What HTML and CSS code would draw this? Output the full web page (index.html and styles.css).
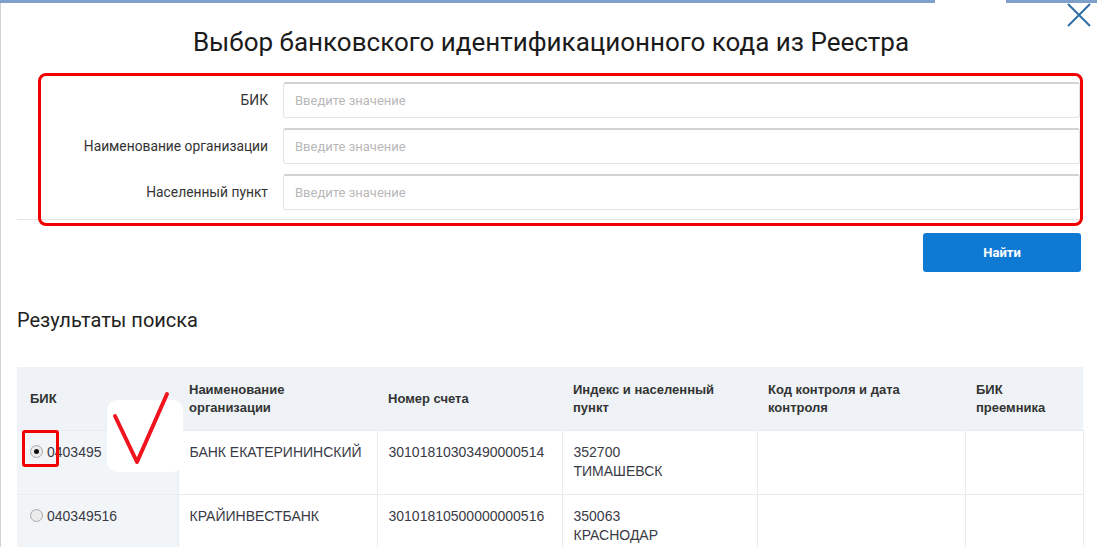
FILE: index.html
```html
<!DOCTYPE html>
<html lang="ru">
<head>
    <meta charset="UTF-8">
    <meta name="viewport" content="width=device-width, initial-scale=1.0">
    <title>Выбор БИК из Реестра</title>
    <link rel="stylesheet" href="styles.css">
</head>
<body>
    <div class="topbar">
        <span class="bar-left"></span>
        <span class="bar-gap"></span>
        <span class="bar-right"></span>
    </div>

    <div class="modal">
        <button class="close" aria-label="Закрыть">
            <svg width="24" height="24" viewBox="0 0 24 24"><path d="M1 1 L23 23 M23 1 L1 23" stroke="#2f6fa6" stroke-width="2" fill="none"/></svg>
        </button>

        <h1>Выбор банковского идентификационного кода из Реестра</h1>

        <div class="search-form">
            <div class="form-row">
                <label>БИК</label>
                <input type="text" placeholder="Введите значение">
            </div>
            <div class="form-row">
                <label>Наименование организации</label>
                <input type="text" placeholder="Введите значение">
            </div>
            <div class="form-row">
                <label>Населенный пункт</label>
                <input type="text" placeholder="Введите значение">
            </div>
        </div>

        <div class="actions">
            <button class="button">Найти</button>
        </div>

        <h2>Результаты поиска</h2>

        <table class="results">
            <colgroup>
                <col style="width: 161px">
                <col style="width: 199px">
                <col style="width: 185px">
                <col style="width: 195px">
                <col style="width: 208px">
                <col style="width: 118px">
            </colgroup>
            <thead>
                <tr>
                    <th>БИК</th>
                    <th>Наименование организации</th>
                    <th>Номер счета</th>
                    <th>Индекс и населенный пункт</th>
                    <th>Код контроля и дата контроля</th>
                    <th>БИК преемника</th>
                </tr>
            </thead>
            <tbody>
                <tr>
                    <td class="bik"><span class="radio checked"></span>0403495</td>
                    <td>БАНК ЕКАТЕРИНИНСКИЙ</td>
                    <td>30101810303490000514</td>
                    <td>352700<br>ТИМАШЕВСК</td>
                    <td></td>
                    <td></td>
                </tr>
                <tr>
                    <td class="bik"><span class="radio"></span>040349516</td>
                    <td>КРАЙИНВЕСТБАНК</td>
                    <td>30101810500000000516</td>
                    <td>350063<br>КРАСНОДАР</td>
                    <td></td>
                    <td></td>
                </tr>
            </tbody>
        </table>
    </div>

    <!-- пометки поверх скриншота -->
    <div class="mark-form"></div>
    <div class="mark-radio"></div>
    <div class="mark-check">
        <svg width="76" height="72" viewBox="0 0 76 72"><path d="M8 16 L30 62 L60 -6" stroke="#f0141e" stroke-width="4" fill="none" stroke-linecap="round" stroke-linejoin="round"/></svg>
    </div>
</body>
</html>
```

FILE: styles.css
```css
body {
    margin: 0;
    padding: 0;
    background: #fff;
    font-family: Roboto, "Liberation Sans", Arial, sans-serif;
    color: #333;
    position: relative;
    width: 1097px;
    height: 547px;
    overflow: hidden;
}
.topbar {
    display: flex;
    height: 3px;
}
.bar-left {
    width: 935px;
    background: #7fa0cb;
}
.bar-gap {
    width: 71px;
}
.bar-right {
    flex: 1;
    background: #7fa0cb;
}
.modal {
    position: relative;
    display: flow-root;
    border-left: 1px solid #d3d3d3;
    padding: 0 14px 0 16px;
    height: 544px;
}
.close {
    position: absolute;
    top: 0;
    right: 6px;
    background: none;
    border: none;
    padding: 0;
    cursor: pointer;
}
.close svg {
    display: block;
}
h1 {
    margin: 24px 0 0;
    font-size: 26px;
    line-height: 30px;
    font-weight: 400;
    color: #1b1b1b;
    text-align: center;
    padding-left: 2px;
}
.search-form {
    margin-top: 25px;
    padding: 0 3px 9px 0;
    border-bottom: 1px solid #e6e6e6;
    display: flex;
    flex-direction: column;
    gap: 10px;
}
.form-row {
    display: flex;
    align-items: center;
    gap: 15px;
}
.form-row label {
    width: 251px;
    text-align: right;
    font-size: 13.8px;
    color: #333;
}
.form-row input {
    flex: 1;
    height: 36px;
    box-sizing: border-box;
    border: 1px solid #e4e4e4;
    border-top: 2px solid #d2d2d2;
    border-radius: 3px;
    padding: 0 11px;
    font-family: Roboto, "Liberation Sans", Arial, sans-serif;
    font-size: 13px;
    color: #333;
}
.form-row input::placeholder {
    color: #b8b8b8;
}
.actions {
    display: flex;
    justify-content: flex-end;
    margin-top: 13px;
    padding-right: 2px;
}
.button {
    width: 158px;
    height: 39px;
    background: #0f7ad4;
    color: #fff;
    border: none;
    border-radius: 3px;
    font-family: Roboto, "Liberation Sans", Arial, sans-serif;
    font-size: 13px;
    font-weight: 700;
    cursor: pointer;
}
h2 {
    margin: 36px 0 0;
    font-size: 20px;
    line-height: 24px;
    font-weight: 400;
    color: #222;
}
.results {
    margin-top: 35px;
    width: 1066px;
    border-collapse: collapse;
    table-layout: fixed;
    font-family: "Liberation Sans", Arial, sans-serif;
}
.results th {
    background: #eff3f7;
    height: 63px;
    padding: 0 11px;
    text-align: left;
    vertical-align: middle;
    font-size: 13px;
    line-height: 18px;
    font-weight: 700;
    color: #333;
}
.results th:first-child {
    padding-left: 13px;
}
.results td {
    height: 64px;
    box-sizing: border-box;
    padding: 12px 11px 0;
    vertical-align: top;
    font-size: 14px;
    line-height: 19px;
    color: #3a3a46;
    border: 1px solid #e7ecf1;
}
.results td.bik {
    background: #f2f5f8;
    padding-left: 13px;
    border-left: none;
}
.radio {
    display: inline-block;
    width: 11px;
    height: 11px;
    border: 1px solid #a9a9a9;
    border-radius: 50%;
    background: #ececec;
    margin-right: 4px;
    vertical-align: -1px;
    position: relative;
}
.radio.checked::after {
    content: "";
    position: absolute;
    left: 3px;
    top: 3px;
    width: 5px;
    height: 5px;
    border-radius: 50%;
    background: #111;
}
.mark-form {
    position: absolute;
    left: 38px;
    top: 73px;
    width: 1039px;
    height: 147px;
    border: 3px solid #f20000;
    border-radius: 8px;
}
.mark-radio {
    position: absolute;
    left: 22px;
    top: 430px;
    width: 31px;
    height: 31px;
    border: 3px solid #f20000;
    border-radius: 3px;
}
.mark-check {
    position: absolute;
    left: 107px;
    top: 400px;
    width: 76px;
    height: 72px;
    background: #fff;
    border-radius: 10px;
}
.mark-check svg {
    display: block;
    overflow: visible;
}
```
